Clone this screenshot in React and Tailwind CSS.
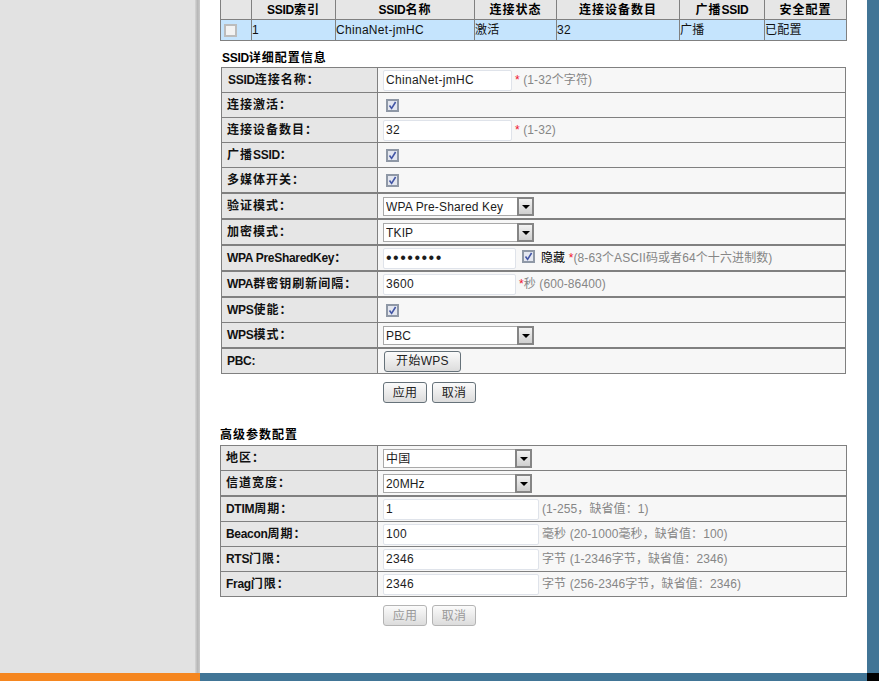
import React from "react";

const FONT = "font-['Liberation_Sans','Noto_Sans_CJK_SC',sans-serif] text-[12px] tracking-[0.3px]";

function BoldText({ text }) {
  const parts = text.split(/([\u4e00-\u9fff：]+)/).filter(Boolean);
  return (
    <>
      {parts.map((p, i) =>
        /[\u4e00-\u9fff：]/.test(p) ? (
          <span key={i} className="tracking-[1px]">{p}</span>
        ) : (
          <span key={i} className="tracking-[-0.3px]">{p}</span>
        )
      )}
    </>
  );
}

function Check({ className = "" }) {
  return (
    <span className={`inline-flex w-[13px] h-[13px] border-2 border-[#8f98a6] bg-[#e4e7f0] items-center justify-center ${className}`}>
      <svg width="9" height="9" viewBox="0 0 9 9" fill="none">
        <path d="M1.5 4.5 L3.6 7.4 L7.6 1" stroke="#4356a6" strokeWidth="1.6" />
      </svg>
    </span>
  );
}

function TextBox({ value, w, type = "text", extra = "" }) {
  return (
    <input
      readOnly
      type={type}
      value={value}
      className={`${w} h-[21px] shrink-0 bg-white border border-[#dfe3ea] rounded-[2px] pl-[2px] text-[#1c1c1c] outline-none ${extra}`}
    />
  );
}

function Select({ value, w }) {
  return (
    <div className={`relative ${w} h-[19px]`}>
      <select
        value={value}
        onChange={() => {}}
        className="appearance-none w-full h-full bg-white border border-[#a9a9a9] pl-[2px] tracking-[0.15px] text-[#1c1c1c] outline-none"
      >
        <option>{value}</option>
      </select>
      <span className="absolute right-0 top-0 w-[17px] h-[19px] border-2 border-[#858585] bg-gradient-to-b from-[#f2f2f2] to-[#cfcfcf] flex items-center justify-center">
        <span className="w-0 h-0 mt-[2px] border-x-[4px] border-x-transparent border-t-[4px] border-t-black" />
      </span>
    </div>
  );
}

function Hint({ children }) {
  return <span className="text-[#868686] tracking-[0.1px] whitespace-nowrap">{children}</span>;
}

function Star() {
  return <span className="text-[#f0142d]">*</span>;
}

function Row({ label, thick, children, labelPad = "pl-[5px]", labelW = "w-[156px]" }) {
  const box = thick ? "h-[26px] border-t-2" : "h-[25px] border-t";
  return (
    <div className={`flex ${box} border-[#808080]`}>
      <div className={`${labelW} shrink-0 bg-[#e6e6e6] border-r border-[#808080] flex items-center ${labelPad} text-[#111] whitespace-nowrap font-bold`}>
        <BoldText text={label} />
      </div>
      <div className="flex-1 bg-[#f7f7f7] flex items-center pl-[5px] gap-[3px]">{children}</div>
    </div>
  );
}

function Btn({ children, disabled, w = "w-[44px]", extra = "" }) {
  return (
    <button
      type="button"
      className={`${w} h-[21px] rounded-[3px] border bg-gradient-to-b from-[#fbfbfb] to-[#dcdcdc] ${
        disabled ? "border-[#b4b4b4] text-[#9a9a9a]" : "border-[#66727a] text-[#222]"
      } ${extra}`}
    >
      {children}
    </button>
  );
}

const HEAD = ["", "SSID索引", "SSID名称", "连接状态", "连接设备数目", "广播SSID", "安全配置"];
const CELLS = ["1", "ChinaNet-jmHC", "激活", "32", "广播", "已配置"];

export default function App() {
  return (
    <div className={`w-[879px] h-[681px] overflow-hidden flex flex-col bg-white text-black ${FONT}`}>
      <div className="flex-1 flex min-h-0">
        <aside className="w-[200px] shrink-0 bg-[#e2e2e2] flex justify-end">
          <div className="w-[5px] bg-gradient-to-r from-[#d6d6d6] via-[#b8b8b8] to-[#cacaca]" />
        </aside>

        <main className="flex-1 bg-white pl-[20px]">
          <div className="w-[627px] grid grid-cols-[31px_84px_139px_82px_123px_85px_82px] border-l border-[#808080]">
            {HEAD.map((h, i) => (
              <div key={i} className="h-[20px] bg-[#e6e6e6] border-r border-b border-[#808080] flex items-center justify-center font-bold whitespace-nowrap">
                <BoldText text={h} />
              </div>
            ))}
            <div className="h-[21px] bg-[#c5e4fd] border-r border-b border-[#808080] flex items-center pl-[3px]">
              <span className="w-[13px] h-[13px] border-2 border-[#bcbcbc] bg-[#f3f3f3]" />
            </div>
            {CELLS.map((c, i) => (
              <div key={i} className="h-[21px] bg-[#c5e4fd] border-r border-b border-[#808080] flex items-center whitespace-nowrap text-[#111]">
                {c}
              </div>
            ))}
          </div>

          <div className="ml-[2px] mt-[6px] h-[20px] pt-px flex items-center font-bold">
            <BoldText text="SSID详细配置信息" />
          </div>

          <div className="ml-[1px] w-[625px] border-x border-b border-[#808080]">
            <Row label="SSID连接名称：" labelPad="pl-[6px]">
              <TextBox value="ChinaNet-jmHC" w="w-[129px]" />
              <Hint><Star /> (1-32个字符)</Hint>
            </Row>
            <Row label="连接激活："><Check className="ml-[3px]" /></Row>
            <Row label="连接设备数目：">
              <TextBox value="32" w="w-[129px]" />
              <Hint><Star /> (1-32)</Hint>
            </Row>
            <Row label="广播SSID："><Check className="ml-[3px]" /></Row>
            <Row label="多媒体开关："><Check className="ml-[3px]" /></Row>
            <Row label="验证模式：" thick><Select value="WPA Pre-Shared Key" w="w-[151px]" /></Row>
            <Row label="加密模式：" thick><Select value="TKIP" w="w-[151px]" /></Row>
            <Row label="WPA PreSharedKey：" thick>
              <TextBox value="12345678" type="password" w="w-[133px]" extra="text-[16px] tracking-[1.5px]" />
              <Check className="ml-[3px] mb-[3px]" />
              <span className="ml-[3px] whitespace-nowrap tracking-[0.1px]">隐藏 <Star /><Hint>(8-63个ASCII码或者64个十六进制数)</Hint></span>
            </Row>
            <Row label="WPA群密钥刷新间隔：" thick>
              <TextBox value="3600" w="w-[133px]" />
              <Hint><Star />秒 (600-86400)</Hint>
            </Row>
            <Row label="WPS使能：" thick><Check className="ml-[3px]" /></Row>
            <Row label="WPS模式："><Select value="PBC" w="w-[151px]" /></Row>
            <Row label="PBC:" thick>
              <Btn w="w-[77px]" extra="ml-px">开始WPS</Btn>
            </Row>
          </div>

          <div className="ml-[163px] mt-[8px] flex gap-[5px]">
            <Btn>应用</Btn>
            <Btn>取消</Btn>
          </div>

          <div className="mt-[21px] h-[21px] flex items-center font-bold">
            <BoldText text="高级参数配置" />
          </div>

          <div className="w-[627px] border-x border-b border-[#808080]">
            <Row labelW="w-[157px]" label="地区："><Select value="中国" w="w-[149px]" /></Row>
            <Row labelW="w-[157px]" label="信道宽度："><Select value="20MHz" w="w-[149px]" /></Row>
            <Row labelW="w-[157px]" label="DTIM周期：" thick>
              <TextBox value="1" w="w-[156px]" />
              <Hint>(1-255，缺省值：1)</Hint>
            </Row>
            <Row labelW="w-[157px]" label="Beacon周期：">
              <TextBox value="100" w="w-[156px]" />
              <Hint>毫秒 (20-1000毫秒，缺省值：100)</Hint>
            </Row>
            <Row labelW="w-[157px]" label="RTS门限：">
              <TextBox value="2346" w="w-[156px]" />
              <Hint>字节 (1-2346字节，缺省值：2346)</Hint>
            </Row>
            <Row labelW="w-[157px]" label="Frag门限：">
              <TextBox value="2346" w="w-[156px]" />
              <Hint>字节 (256-2346字节，缺省值：2346)</Hint>
            </Row>
          </div>

          <div className="ml-[163px] mt-[8px] flex gap-[5px]">
            <Btn disabled>应用</Btn>
            <Btn disabled>取消</Btn>
          </div>
        </main>

        <div className="w-[12px] shrink-0 bg-[#417596]" />
      </div>

      <footer className="h-[8px] shrink-0 flex">
        <div className="w-[200px] bg-[#f5861f]" />
        <div className="flex-1 bg-[#417596]" />
        <div className="w-[12px] bg-black" />
      </footer>
    </div>
  );
}
